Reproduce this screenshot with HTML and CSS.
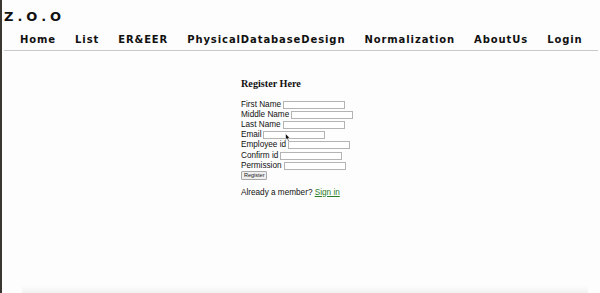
FILE: index.html
```html
<!DOCTYPE html>
<html>
<head>
<meta charset="utf-8">
<title>Z.O.O</title>
<link rel="stylesheet" href="styles.css">
</head>
<body>
<div class="page">
  <header class="header">
    <h1 class="logo">Z.O.O</h1>
    <nav>
      <ul class="nav">
        <li><a href="#">Home</a></li>
        <li><a href="#">List</a></li>
        <li><a href="#">ER&amp;EER</a></li>
        <li><a href="#">PhysicalDatabaseDesign</a></li>
        <li><a href="#">Normalization</a></li>
        <li><a href="#">AboutUs</a></li>
        <li><a href="#">Login</a></li>
      </ul>
    </nav>
    <hr class="rule">
  </header>
  <main class="main">
    <form class="register">
      <h2 class="register-title">Register Here</h2>
      <div class="row">First Name <input type="text"></div>
      <div class="row">Middle Name <input type="text"></div>
      <div class="row">Last Name <input type="text"></div>
      <div class="row">Email <input type="text"></div>
      <div class="row">Employee id <input type="text"></div>
      <div class="row">Confirm id <input type="text"></div>
      <div class="row">Permission <input type="text"></div>
      <div class="row"><button type="button" class="btn">Register</button></div>
      <p class="member">Already a member? <a href="#" class="signin">Sign in</a></p>
    </form>
  </main>
  <svg class="cursor" width="6" height="9" viewBox="0 0 6 9"><path d="M0.5 0.5 L0.5 7 L2 5.6 L3.2 8.3 L4.2 7.9 L3 5.2 L5 5.2 Z" fill="#111" stroke="#fff" stroke-width="0.6"/></svg>
  <div class="shade"></div>
</div>
</body>
</html>
```
FILE: styles.css
```css
html, body {
  margin: 0;
  padding: 0;
  background: #fdfdfd;
}
.page {
  position: relative;
  width: 600px;
  height: 293px;
  box-sizing: border-box;
  border-left: 2px solid #3a3632;
  overflow: hidden;
}
.header {
  padding: 10px 2px 0 2px;
}
.logo {
  margin: 0;
  font-family: "DejaVu Sans", Verdana, sans-serif;
  font-weight: bold;
  font-size: 13px;
  letter-spacing: 4px;
  line-height: 14px;
  color: #111;
}
.nav {
  list-style: none;
  margin: 0;
  padding: 5px 0 0 16px;
  display: flex;
  gap: 19px;
}
.nav a {
  font-family: "DejaVu Sans", Verdana, sans-serif;
  font-weight: bold;
  font-size: 10px;
  letter-spacing: 0.9px;
  line-height: 12px;
  color: #111;
  text-decoration: none;
}
.rule {
  margin: 3px 0 0 0;
  border: 0;
  border-top: 1px solid #c8c8c8;
  height: 0;
}
.main {
  padding: 27px 0 0 239px;
}
.register {
  font-family: "Liberation Sans", Arial, sans-serif;
  font-size: 8.2px;
  color: #111;
}
.register-title {
  margin: 0 0 10px 0;
  font-family: "Liberation Serif", "Times New Roman", serif;
  font-size: 10.2px;
  font-weight: bold;
  line-height: 12px;
}
.row {
  height: 10.1px;
  line-height: 10px;
  display: flex;
  align-items: center;
  gap: 2px;
}
.row input {
  width: 58px;
  height: 6px;
  padding: 0 1px;
  margin: 0;
  border: 1px solid #b4b4b4;
  background: #fff;
  font-size: 6px;
}
.btn {
  margin-top: 0;
  font-family: "Liberation Sans", Arial, sans-serif;
  font-size: 5.5px;
  padding: 1px 2px;
  height: 9px;
  line-height: 5px;
  border: 1px solid #a8a8a8;
  border-radius: 1px;
  background: #efefef;
  color: #222;
}
.member {
  margin: 7px 0 0 0;
  line-height: 10px;
}
.signin {
  color: #2a7d2a;
  text-decoration: underline;
}
.cursor {
  position: absolute;
  left: 283px;
  top: 133px;
}
.shade {
  position: absolute;
  left: 20px;
  right: 12px;
  bottom: 0;
  height: 8px;
  background: linear-gradient(to bottom, rgba(0,0,0,0), rgba(0,0,0,0.045));
}
```
